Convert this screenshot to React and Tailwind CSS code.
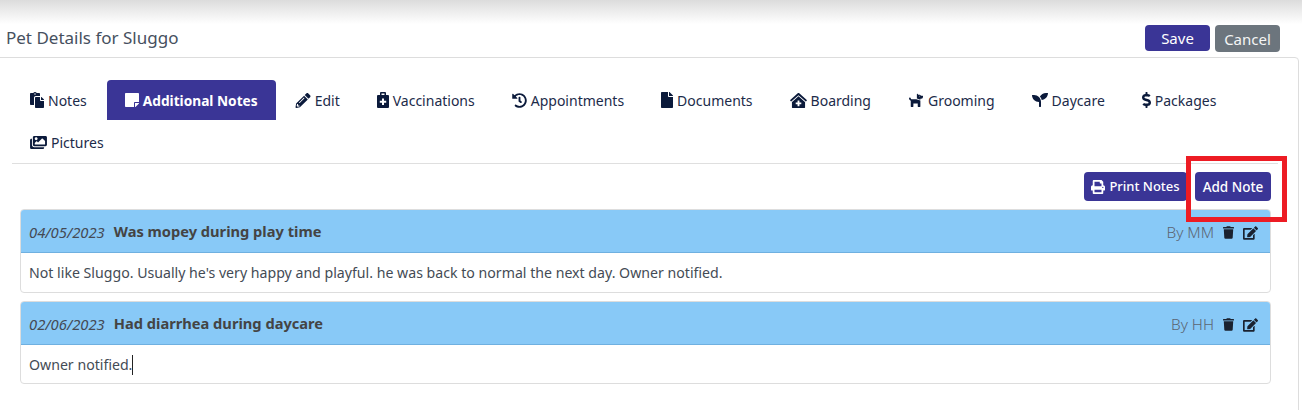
import React from "react";
import { FaPaste, FaStickyNote, FaPencilAlt, FaHistory, FaFile, FaClinicMedical, FaDog, FaSeedling, FaDollarSign, FaImages, FaPrint, FaTrash, FaEdit } from "react-icons/fa";

function MedBag({ className }) {
  return (
    <svg viewBox="0 0 12 16" fill="currentColor" className={className}>
      <path d="M4 0h4a1 1 0 0 1 1 1v2h2a1 1 0 0 1 1 1v11a1 1 0 0 1-1 1H1a1 1 0 0 1-1-1V4a1 1 0 0 1 1-1h2V1a1 1 0 0 1 1-1zm.5 1.5V3h3V1.5h-3z" fillRule="evenodd" />
      <path d="M5 6.5h2v2.2h2.2v2H7v2.2H5v-2.2H2.8v-2H5z" fill="#ffffff" />
    </svg>
  );
}

const tabs = [
  [FaPaste, "Notes", "w-[14px] h-4"],
  [FaStickyNote, "Additional Notes", "w-[14px] h-4", true],
  [FaPencilAlt, "Edit", "w-[16px] h-[15px]"],
  [MedBag, "Vaccinations", "w-[12px] h-4"],
  [FaHistory, "Appointments", "w-[15px] h-[15px]"],
  [FaFile, "Documents", "w-[12px] h-4"],
  [FaClinicMedical, "Boarding", "w-[17px] h-[15px]"],
  [FaDog, "Grooming", "w-[16px] h-[14px]"],
  [FaSeedling, "Daycare", "w-4 h-4"],
  [FaDollarSign, "Packages", "w-[9px] h-4"],
  [FaImages, "Pictures", "w-[17px] h-[15px]"],
];

const notes = [
  { date: "04/05/2023", title: "Was mopey during play time", by: "By MM", body: "Not like Sluggo. Usually he's very happy and playful. he was back to normal the next day. Owner notified.", bodyH: "h-[39px]" },
  { date: "02/06/2023", title: "Had diarrhea during daycare", by: "By HH", body: "Owner notified.", caret: true, bodyH: "h-[38px] pt-[1px]" },
];

function Tab({ Icon, label, size, active }) {
  return (
    <div className={active
      ? "h-10 ml-[1px] px-[18px] flex items-center gap-[4px] rounded-t-[4px] bg-[#3a3596] text-white font-bold text-[13.7px]"
      : "h-10 px-[18px] flex items-center gap-[4px] text-[#1c2b4a] text-[14px]"}>
      <Icon className={`${size} shrink-0 ${active ? "text-white" : "text-[#0b1a3b]"}`} />
      <span className={active ? "pt-[2px]" : "pt-[1px]"}>{label}</span>
    </div>
  );
}

function Note({ n }) {
  return (
    <div className="rounded-[4px] border border-[#dddddd] bg-white">
      <div className="h-[43px] pt-[2px] px-2 flex items-center bg-[#88c9f7] border-b border-[#6fb0e0] rounded-t-[3px] text-[#444a55]">
        <span className="italic text-[14.8px] mr-[9px]">{n.date}</span>
        <span className="font-bold text-[14.65px] text-[#444444]">{n.title}</span>
        <span className="ml-auto text-[15.3px] font-light text-[#5b6573]">{n.by}</span>
        <FaTrash className="ml-[9px] mr-[9px] mt-[1px] w-[11px] h-[13px] text-[#1a2230]" />
        <FaEdit className="mr-[4px] mt-[1px] w-[15px] h-[14px] text-[#1a2230]" />
      </div>
      <div className={`${n.bodyH} px-2 flex items-center text-[14.15px] text-[#444b55]`}>
        <span>{n.body}</span>
        {n.caret && <span className="w-px h-5 bg-[#222222]" />}
      </div>
    </div>
  );
}

export default function App() {
  return (
    <div className="w-[1302px] h-[410px] overflow-hidden bg-white text-[14px] font-['Noto_Sans','Open_Sans',sans-serif]">
      <div className="h-[24px] bg-gradient-to-b from-[#dcdcdc] to-white" />
      <div className="h-[33px] pl-[6px] pr-[22px] flex items-start justify-between">
        <h1 className="text-[17px] leading-[28px] text-[#46505e]">Pet Details for Sluggo</h1>
        <div className="flex gap-[5px] mt-[1px]">
          <button className="w-[65px] h-[26px] rounded-[4px] bg-[#3a3596] text-white text-[15px]">Save</button>
          <button className="w-[65px] h-[27px] pt-[2px] rounded-[4px] bg-[#6c757d] text-[#f5f5f5] text-[15px]">Cancel</button>
        </div>
      </div>
      <div className="relative ml-[-4px] mr-[3px] h-[360px] rounded-[4px] border border-[#dddddd] pl-[15px] pr-[20px] pt-[22px]">
        <div className="flex flex-wrap gap-x-[1px] gap-y-[2px] pb-[1px] border-b border-[#dfdfdf]">
          {tabs.map(([Icon, label, size, active]) => (
            <Tab key={label} Icon={Icon} label={label} size={size} active={active} />
          ))}
        </div>
        <div className="flex justify-end gap-2 mt-2 mr-[7px] font-medium">
          <button className="w-[103px] h-[29px] pt-[1px] rounded-[4px] bg-[#3a3596] text-white text-[13px] flex items-center justify-center gap-[4px]">
            <FaPrint className="text-[14px]" /> Print Notes
          </button>
          <button className="w-[76px] h-[29px] pt-[1px] rounded-[4px] bg-[#3a3596] text-white text-[13.5px]">Add Note</button>
        </div>
        <div className="ml-[8px] mr-[7px] mt-2 flex flex-col gap-2">
          {notes.map((n) => <Note key={n.date} n={n} />)}
        </div>
        <div className="absolute left-[1189px] top-[98px] w-[101px] h-[66px] border-[5px] border-[#ed1c24]" />
      </div>
    </div>
  );
}
